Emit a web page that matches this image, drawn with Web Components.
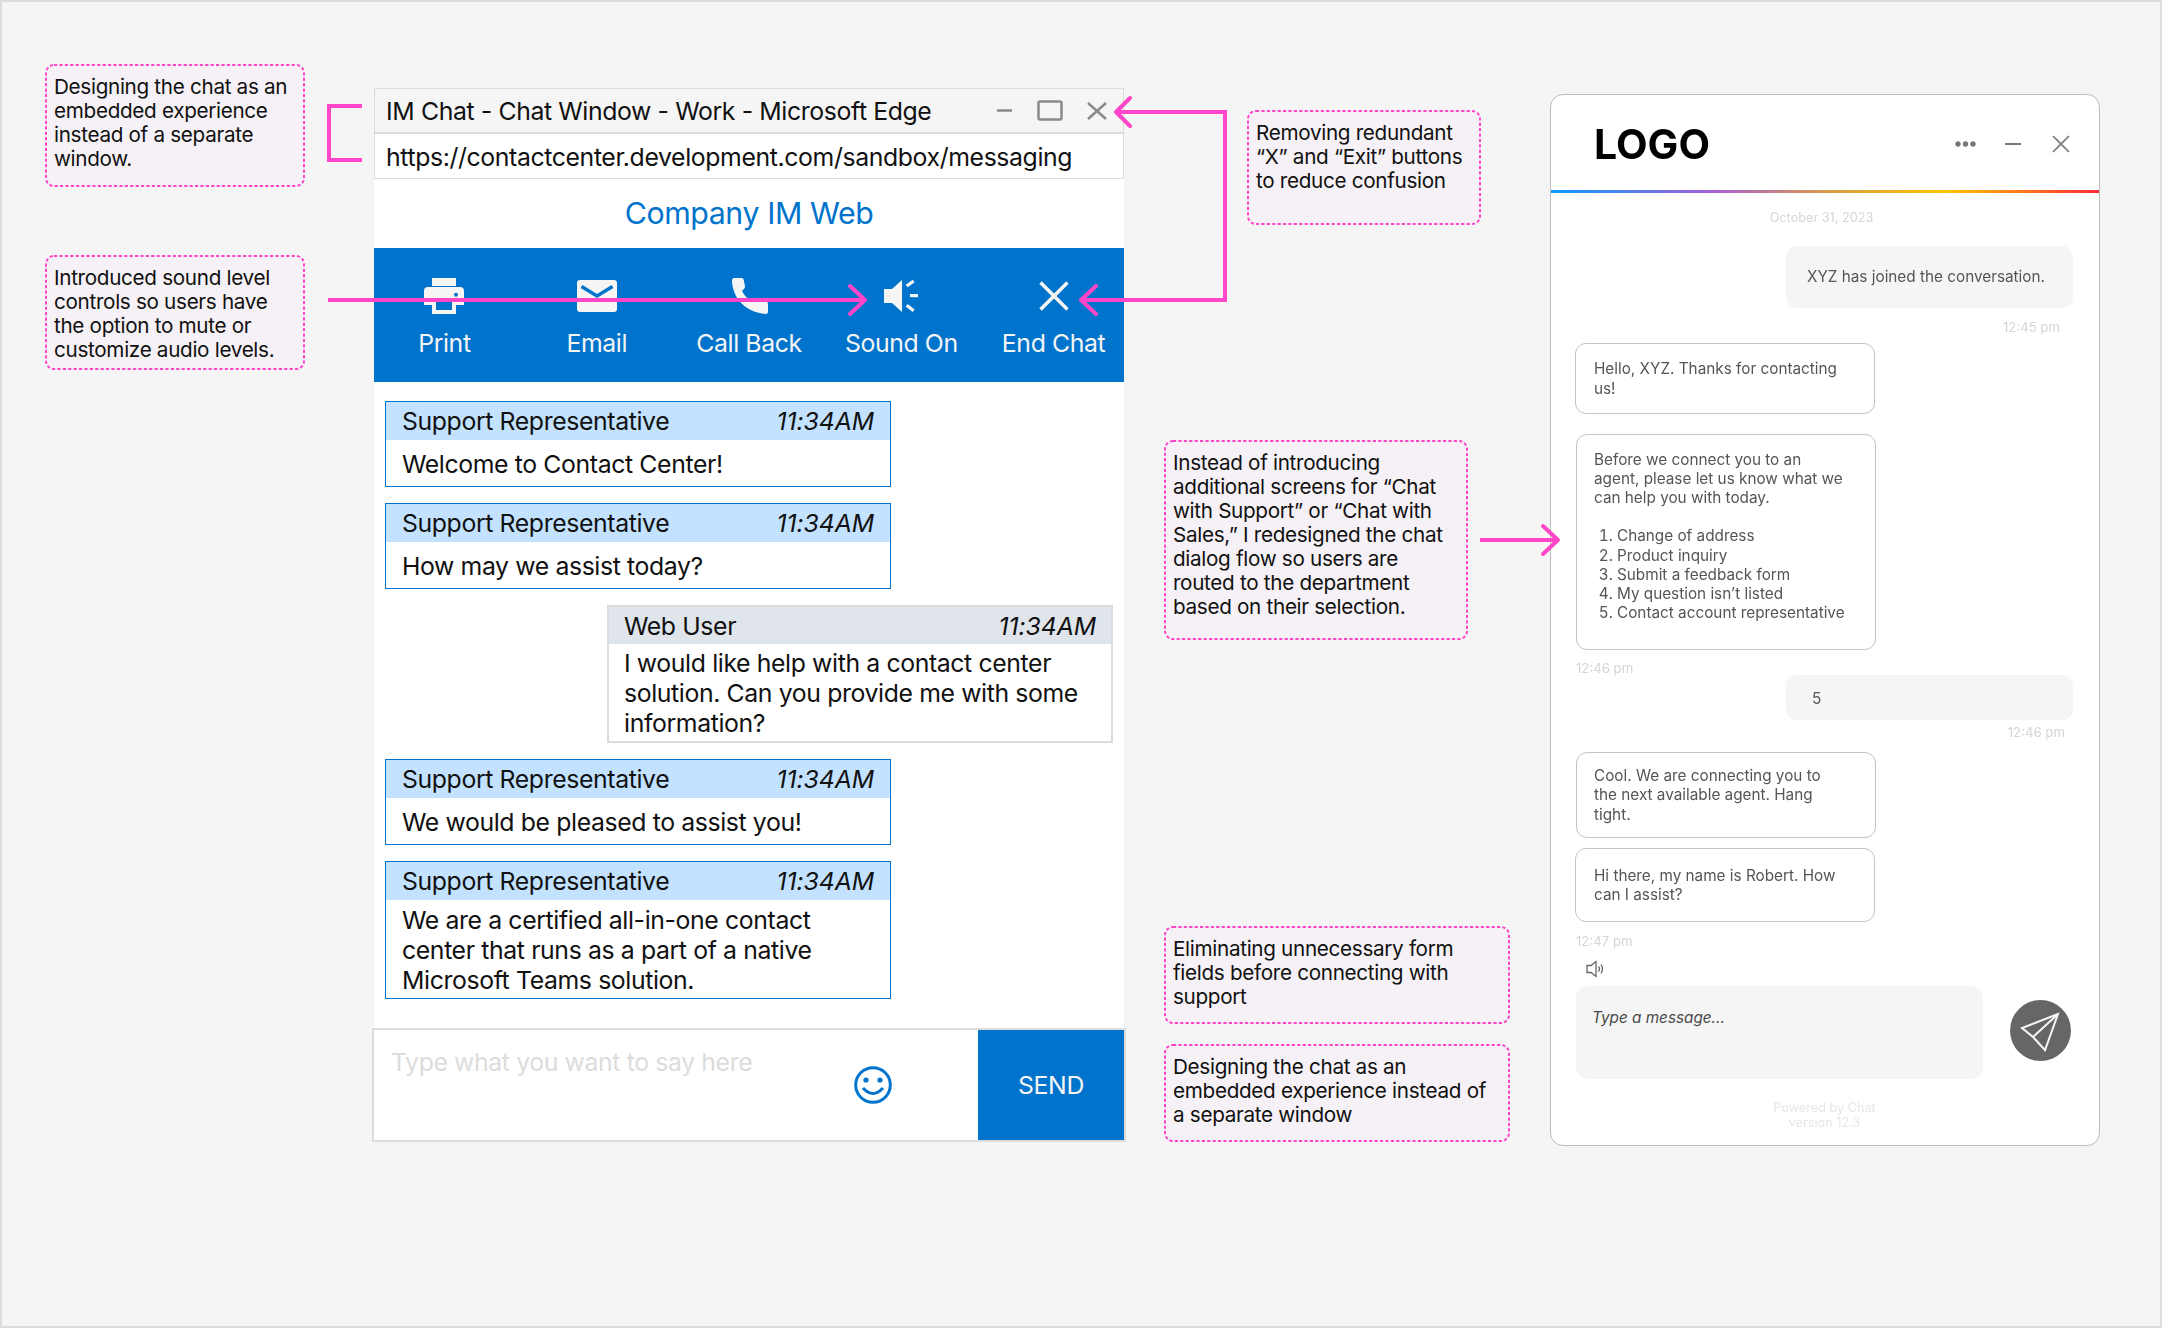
<!DOCTYPE html>
<html>
<head>
<meta charset="utf-8">
<title>Chat redesign</title>
<style>
  html, body { margin: 0; background: #f5f5f5; font-family: Inter, "Liberation Sans", sans-serif; }
  ol { margin: 19px 0 0; padding: 0 0 0 23px; }
</style>
</head>
<body>

<x-board>
  <x-column style="margin-left:43px;width:260px;padding-top:62px">
    <x-note style="height:123px">Designing the chat as an embedded experience instead of a separate window.</x-note>
    <x-note style="height:115px;margin-top:68px">Introduced sound level controls so users have the option to mute or customize audio levels.</x-note>
  </x-column>

  <x-im-window style="margin-left:69px;margin-top:86px" heading="Company IM Web"
      window-title="IM Chat - Chat Window - Work - Microsoft Edge"
      url="https://contactcenter.development.com/sandbox/messaging">
    <x-tool-item slot="tools" label="Print">
      <svg width="40" height="36" viewBox="0 0 40 36">
        <rect x="8" width="24" height="8" fill="#f5f5f5"/>
        <path d="M4 9H36Q40 9 40 13V27H32V22H8V27H0V13Q0 9 4 9Z" fill="#f5f5f5"/>
        <path d="M8 22H12V32H28V22H32V36H8Z" fill="#f5f5f5"/>
        <circle cx="32" cy="16.7" r="2" fill="#0073cc"/>
      </svg>
    </x-tool-item>
    <x-tool-item slot="tools" label="Email">
      <svg width="40" height="36" viewBox="0 0 40 36">
        <rect y="2" width="40" height="32" rx="3" fill="#f5f5f5"/>
        <path d="M4.500 8.500L20 18L35.500 8.500" fill="none" stroke="#0073cc" stroke-width="3.400"/>
      </svg>
    </x-tool-item>
    <x-tool-item slot="tools" label="Call Back">
      <svg width="37" height="36" viewBox="0 0 37 36">
        <path d="M1 2.500Q1 0 3.500 0H11Q12.300 0 12.700 2L14 8Q14.300 10 12.700 11.300L11 12.800Q13 18 19 22L21 20.400Q23 19.300 25 20L35 23Q37 23.800 37 26V34Q37 36 35 36Q14 34 5 18Q1 10 1 2.500Z" fill="#f5f5f5"/>
      </svg>
    </x-tool-item>
    <x-tool-item slot="tools" label="Sound On">
      <svg width="35" height="36" viewBox="0 0 35 36">
        <path d="M0 11H8L18 2V34L8 25H0Z" fill="#f5f5f5"/>
        <path d="M22.700 8L29.700 3M26 17.700H34M22.700 27.300L29.700 32.700" stroke="#f5f5f5" stroke-width="3.300" fill="none"/>
      </svg>
    </x-tool-item>
    <x-tool-item slot="tools" label="End Chat">
      <svg width="30" height="36" viewBox="0 0 30 36">
        <path d="M1.500 4.500L28.500 31.500M28.500 4.500L1.500 31.500" stroke="#f5f5f5" stroke-width="3.600" fill="none"/>
      </svg>
    </x-tool-item>

    <x-im-message sender="Support Representative" time="11:34AM">Welcome to Contact Center!</x-im-message>
    <x-im-message sender="Support Representative" time="11:34AM">How may we assist today?</x-im-message>
    <x-im-message mine sender="Web User" time="11:34AM">I would like help with a contact center solution. Can you provide me with some information?</x-im-message>
    <x-im-message sender="Support Representative" time="11:34AM">We would be pleased to assist you!</x-im-message>
    <x-im-message sender="Support Representative" time="11:34AM">We are a certified all-in-one contact center that runs as a part of a native Microsoft Teams solution.</x-im-message>
  </x-im-window>

  <x-column style="margin-left:40px;width:346px;padding-top:108px">
    <x-note style="height:115px;width:234px;margin-left:83px">Removing redundant “X” and “Exit” buttons to reduce confusion</x-note>
    <x-note style="height:200px;width:304px;margin-top:215px">Instead of introducing additional screens for “Chat with Support” or “Chat with Sales,” I redesigned the chat dialog flow so users are routed to the department based on their selection.</x-note>
    <x-note style="height:98px;margin-top:286px">Eliminating unnecessary form fields before connecting with support</x-note>
    <x-note style="height:98px;margin-top:20px">Designing the chat as an embedded experience instead of a separate window</x-note>
  </x-column>

  <x-widget style="margin-left:40px;margin-top:92px">
    <x-stamp center style="margin-top:17px">October 31, 2023</x-stamp>
    <x-bubble mine style="margin-top:20px;height:62px">XYZ has joined the conversation.</x-bubble>
    <x-stamp style="margin:11px 13px 0 0;text-align:right">12:45 pm</x-stamp>
    <x-bubble style="margin-top:8px;height:71px;margin-left:-1px">Hello, XYZ. Thanks for contacting<br>us!</x-bubble>
    <x-bubble style="margin-top:20px;height:216px;padding-bottom:12px;padding-left:17px">Before we connect you to an<br>agent, please let us know what we<br>can help you with today.
      <ol>
        <li>Change of address</li>
        <li>Product inquiry</li>
        <li>Submit a feedback form</li>
        <li>My question isn’t listed</li>
        <li>Contact account representative</li>
      </ol>
    </x-bubble>
    <x-stamp style="margin-top:10px">12:46 pm</x-stamp>
    <x-bubble mine style="margin-top:-1px;height:45px;--inset:26px;padding-top:2px">5</x-bubble>
    <x-stamp style="margin:4px 8px 0 0;text-align:right">12:46 pm</x-stamp>
    <x-bubble style="margin-top:12px;height:86px;padding-left:17px">Cool. We are connecting you to<br>the next available agent. Hang<br>tight.</x-bubble>
    <x-bubble style="margin-top:10px;height:74px;margin-left:-1px">Hi there, my name is Robert. How<br>can I assist?</x-bubble>
    <x-stamp style="margin-top:11px">12:47 pm</x-stamp>
  </x-widget>

  <x-annotations></x-annotations>
</x-board>

<template id="board-template">
  <style>
    :host {
      display: flex;
      align-items: flex-start;
      position: relative;
      box-sizing: border-box;
      width: 2162px;
      height: 1328px;
      border: 2px solid #dcdcdc;
      background: #f5f5f5;
      overflow: hidden;
    }
  </style>
  <slot></slot>
</template>

<template id="column-template">
  <style>
    :host { display: flex; flex-direction: column; align-items: stretch; flex: none; }
  </style>
  <slot></slot>
</template>

<template id="note-template">
  <style>
    :host {
      display: block;
      position: relative;
      box-sizing: border-box;
      padding: 11px 9px 0 9px;
      border-radius: 9px;
      background: #f6f1f6;
      color: #111;
      font: 400 20.700px/24px Inter, "Liberation Sans", sans-serif;
      letter-spacing: -0.32px;
    }
    svg { position: absolute; inset: 0; width: 100%; height: 100%; overflow: visible; }
    rect { x: 1px; y: 1px; width: calc(100% - 2px); height: calc(100% - 2px); fill: none; stroke: #ff45c8; stroke-width: 2; stroke-dasharray: 3.200 2.200; rx: 8px; }
  </style>
  <svg aria-hidden="true"><rect></rect></svg>
  <slot></slot>
</template>

<template id="window-template">
  <style>
    :host {
      display: flex;
      flex-direction: column;
      flex: none;
      width: 750px;
      height: 1054px;
      background: #fff;
      color: #111;
      font: 400 24.800px/30px Inter, "Liberation Sans", sans-serif;
      letter-spacing: -0.38px;
    }
    .bar {
      display: flex;
      align-items: center;
      box-sizing: border-box;
      padding-left: 11px;
      border: 1.500px solid #dcdcdc;
      white-space: nowrap;
    }
    .title { height: 46px; padding-top: 1px; background: #f5f5f5; border-bottom-width: 2.500px; }
    .title span { flex: 1; }
    .title svg { margin-right: 16px; }
    .url { height: 45px; padding-top: 2px; border-top: 0; background: #fff; }
    h1 {
      box-sizing: border-box;
      margin: 0;
      height: 69px;
      padding-bottom: 1px;
      display: flex;
      align-items: center;
      justify-content: center;
      color: #0073cc;
      font: 400 30.300px/36px Inter, "Liberation Sans", sans-serif;
      letter-spacing: -0.4px;
    }
    .tools {
      display: grid;
      grid-template-columns: repeat(5, 152.300px);
      justify-content: center;
      height: 134px;
      background: #0073cc;
    }
    .log {
      flex: 1;
      display: flex;
      flex-direction: column;
      gap: 16px;
      padding: 19px 11px 0;
    }
    .compose {
      display: flex;
      align-items: stretch;
      box-sizing: border-box;
      height: 114px;
      margin: 0 -2px;
      border: 2px solid #dcdcdc;
      background: #fff;
    }
    .hint { flex: 1; padding: 17px 0 0 17px; color: #dcdcdc; position: relative; }
    .smile { position: absolute; left: 480px; top: 36px; }
    .send {
      width: 146px;
      display: flex;
      align-items: center;
      justify-content: center;
      background: #0073cc;
      color: #f5f5f5;
    }
  </style>
  <div class="bar title">
    <span id="title"></span>
    <svg width="110" height="24" viewBox="0 0 110 24" fill="none" stroke="#8a8a8a">
      <path d="M0 11.500H15" stroke-width="2.500"/>
      <rect x="41.500" y="2.500" width="23" height="18" rx="1.500" stroke-width="2.500"/>
      <path d="M91 4L109 20M109 4L91 20" stroke-width="2.500"/>
    </svg>
  </div>
  <div class="bar url" id="url"></div>
  <h1 id="heading"></h1>
  <div class="tools"><slot name="tools"></slot></div>
  <div class="log"><slot></slot></div>
  <div class="compose">
    <div class="hint">Type what you want to say here
      <svg class="smile" width="38" height="38" viewBox="0 0 38 38" fill="none" stroke="#0073cc">
        <circle cx="19" cy="19" r="17.300" stroke-width="3"/>
        <circle cx="12" cy="14" r="2.600" fill="#0073cc" stroke="none"/>
        <circle cx="26" cy="14" r="2.600" fill="#0073cc" stroke="none"/>
        <path d="M9 22Q19 33 29 22" stroke-width="3"/>
      </svg>
    </div>
    <div class="send">SEND</div>
  </div>
</template>

<template id="tool-template">
  <style>
    :host {
      display: flex;
      flex-direction: column;
      align-items: center;
      padding-top: 30px;
      color: #f5f5f5;
    }
    .icon { height: 36px; display: flex; }
    .label { margin-top: 14px; white-space: nowrap; }
  </style>
  <div class="icon"><slot></slot></div>
  <div class="label" id="label"></div>
</template>

<template id="message-template">
  <style>
    :host {
      display: block;
      flex: none;
      box-sizing: border-box;
      width: 506px;
      border: 1px solid #0073cc;
      background: #fff;
    }
    :host([mine]) { align-self: flex-end; border: 2px solid #dcdcdc; }
    .head {
      display: flex;
      justify-content: space-between;
      align-items: center;
      height: 38px;
      padding: 0 16px;
      background: #c2e2ff;
    }
    :host([mine]) .head { background: #e0e5ec; height: 37px; padding: 0 15px; }
    .time { font-style: italic; letter-spacing: -0.1px; }
    .body {
      display: flex;
      align-items: center;
      box-sizing: border-box;
      min-height: 46px;
      padding: 4.500px 12px 3.500px 16px;
    }
    :host([mine]) .body { padding: 4px 12px 3px 15px; }
  </style>
  <div class="head"><span id="sender"></span><span class="time" id="time"></span></div>
  <div class="body"><div><slot></slot></div></div>
</template>

<template id="widget-template">
  <style>
    :host {
      display: flex;
      flex-direction: column;
      flex: none;
      position: relative;
      box-sizing: border-box;
      width: 550px;
      height: 1052px;
      padding: 0 26px 0 25px;
      border: 1.500px solid #bdbdbd;
      border-radius: 13px;
      background: #fff;
      color: #555;
      font: 400 15.300px/19.200px Inter, "Liberation Sans", sans-serif;
      overflow: hidden;
      filter: blur(0.4px);
    }
    header {
      display: flex;
      align-items: center;
      justify-content: space-between;
      box-sizing: border-box;
      height: 95px;
      margin: 0 -26px 0 -25px;
      padding: 2px 28px 0 43px;
    }
    .logo { color: #000; font: 700 41px/48px Inter, "Liberation Sans", sans-serif; letter-spacing: 0; }
    .rainbow {
      height: 3px;
      flex: none;
      margin: 0 -26px 0 -25px;
      background: linear-gradient(90deg, #0a9bff 0%, #a960d6 30%, #d79a4a 50%, #ffc400 72%, #ff2a3a 100%);
    }
    .speaker { display: block; margin: 11px 0 0 10px; flex: none; }
    .compose { display: flex; align-items: flex-start; margin-top: 8px; flex: none; }
    .input {
      box-sizing: border-box;
      width: 407px;
      height: 93px;
      padding: 21.500px 16px;
      border-radius: 12px;
      background: #f5f5f5;
      font-style: italic;
      color: #4a4a4a;
    }
    .send { margin: 14px 0 0 27px; display: block; }
    .foot {
      margin-top: 21px;
      text-align: center;
      color: #e6e6e6;
      font-size: 12.700px;
      line-height: 15px;
    }
  </style>
  <header>
    <div class="logo">LOGO</div>
    <svg width="116" height="20" viewBox="0 0 116 20" fill="none" stroke="#777">
      <g fill="#777" stroke="none"><circle cx="3" cy="10" r="2.700"/><circle cx="10.500" cy="10" r="2.700"/><circle cx="18" cy="10" r="2.700"/></g>
      <path d="M50 10H66" stroke-width="2"/>
      <path d="M98 2L114 18M114 2L98 18" stroke-width="1.600"/>
    </svg>
  </header>
  <div class="rainbow"></div>
  <slot></slot>
  <svg class="speaker" width="18" height="18" viewBox="0 0 18 18" fill="none" stroke="#666" stroke-width="1.300">
    <path d="M1 5.500H5L10 1.500V16.500L5 12.500H1Z"/>
    <path d="M12.500 6.500Q14.500 9 12.500 11.500M15 4.500Q18 9 15 13.500"/>
  </svg>
  <div class="compose">
    <div class="input">Type a message...</div>
    <svg class="send" width="61" height="61" viewBox="0 0 61 61" fill="none">
      <circle cx="30.500" cy="30.500" r="30.500" fill="#666"/>
      <path d="M48 14L12 28L23 37L35 50ZM48 14L23 37" stroke="#f5f5f5" stroke-width="2" stroke-linejoin="miter"/>
    </svg>
  </div>
  <div class="foot">Powered by Chat<br>version 12.3</div>
</template>

<template id="bubble-template">
  <style>
    :host {
      display: flex;
      align-items: center;
      flex: none;
      box-sizing: border-box;
      width: 300px;
      padding-left: 18px;
      border: 1.500px solid #c4c4c4;
      border-radius: 11px;
      background: #fff;
    }
    :host([mine]) {
      align-self: flex-end;
      width: 287px;
      padding-left: var(--inset, 21px);
      border: 0;
      background: #f5f5f5;
    }
  </style>
  <div><slot></slot></div>
</template>

<template id="stamp-template">
  <style>
    :host {
      display: block;
      flex: none;
      height: 16px;
      color: #d5d5d5;
      font-size: 13.200px;
      line-height: 16px;
    }
    :host([center]) { text-align: center; margin-right: 6px; font-size: 12.700px; }
  </style>
  <slot></slot>
</template>

<template id="annotations-template">
  <style>
    :host { position: absolute; left: -2px; top: -2px; width: 2162px; height: 1328px; pointer-events: none; }
    svg { display: block; }
  </style>
  <svg width="2162" height="1328" viewBox="0 0 2162 1328" fill="none" stroke="#ff45c8" stroke-width="4">
    <path d="M362 106H329V160H362"/>
    <path d="M328 300H865"/>
    <path d="M850 286L865 300L850 314" stroke-linecap="round" stroke-linejoin="round"/>
    <path d="M1081 300H1225V112H1116"/>
    <path d="M1096 286L1081 300L1096 314M1130 98L1116 112L1130 126" stroke-linecap="round" stroke-linejoin="round"/>
    <path d="M1480 540H1557"/>
    <path d="M1543 526L1558 540L1543 554" stroke-linecap="round" stroke-linejoin="round"/>
  </svg>
</template>

<script>
  function shadowFrom(el, id) {
    let root = el.attachShadow({ mode: "open" });
    root.append(document.getElementById(id).content.cloneNode(true));
    return root;
  }

  class Plain extends HTMLElement {
    constructor() {
      super();
      shadowFrom(this, this.constructor.templateId);
    }
  }

  class XBoard extends Plain { static templateId = "board-template"; }
  class XColumn extends Plain { static templateId = "column-template"; }
  class XNote extends Plain { static templateId = "note-template"; }
  class XWidget extends Plain { static templateId = "widget-template"; }
  class XBubble extends Plain { static templateId = "bubble-template"; }
  class XStamp extends Plain { static templateId = "stamp-template"; }
  class XAnnotations extends Plain { static templateId = "annotations-template"; }

  class XImWindow extends Plain {
    static templateId = "window-template";
    connectedCallback() {
      let root = this.shadowRoot;
      root.querySelector("#title").textContent = this.getAttribute("window-title");
      root.querySelector("#url").textContent = this.getAttribute("url");
      root.querySelector("#heading").textContent = this.getAttribute("heading");
    }
  }

  class XToolItem extends Plain {
    static templateId = "tool-template";
    connectedCallback() {
      this.shadowRoot.querySelector("#label").textContent = this.getAttribute("label");
    }
  }

  class XImMessage extends Plain {
    static templateId = "message-template";
    connectedCallback() {
      this.shadowRoot.querySelector("#sender").textContent = this.getAttribute("sender");
      this.shadowRoot.querySelector("#time").textContent = this.getAttribute("time");
    }
  }

  customElements.define("x-board", XBoard);
  customElements.define("x-column", XColumn);
  customElements.define("x-note", XNote);
  customElements.define("x-widget", XWidget);
  customElements.define("x-bubble", XBubble);
  customElements.define("x-stamp", XStamp);
  customElements.define("x-annotations", XAnnotations);
  customElements.define("x-im-window", XImWindow);
  customElements.define("x-tool-item", XToolItem);
  customElements.define("x-im-message", XImMessage);
</script>
</body>
</html>
